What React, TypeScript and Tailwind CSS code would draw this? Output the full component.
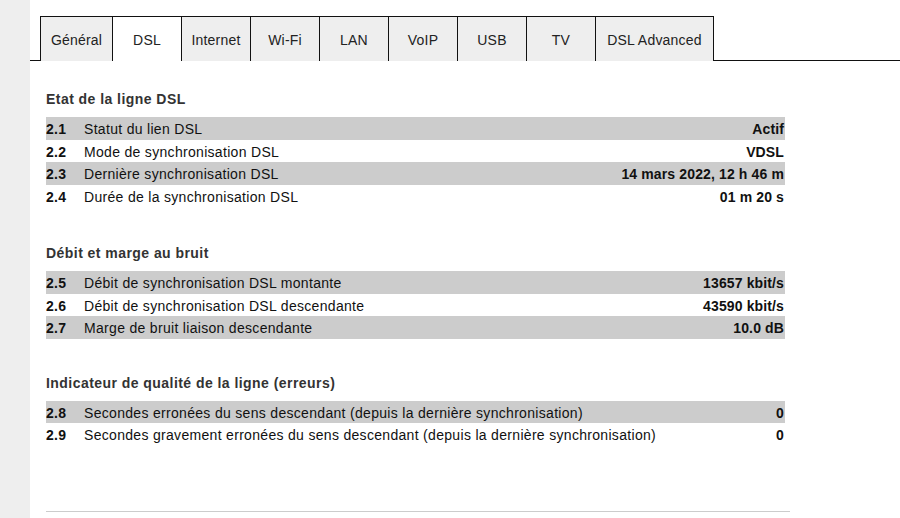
import React from "react";

const tabs = [
  { label: "Général", w: "w-[72px]" },
  { label: "DSL", w: "w-[69px]", active: true },
  { label: "Internet", w: "w-[69px]" },
  { label: "Wi-Fi", w: "w-[69px]" },
  { label: "LAN", w: "w-[69px]" },
  { label: "VoIP", w: "w-[69px]" },
  { label: "USB", w: "w-[69px]" },
  { label: "TV", w: "w-[69px]" },
  { label: "DSL Advanced", w: "w-[119px]", last: true },
];

type Row = { n: string; label: string; value: string };

const sections: { title: string; rows: Row[]; mt: string }[] = [
  {
    title: "Etat de la ligne DSL",
    mt: "mt-[29px]",
    rows: [
      { n: "2.1", label: "Statut du lien DSL", value: "Actif" },
      { n: "2.2", label: "Mode de synchronisation DSL", value: "VDSL" },
      { n: "2.3", label: "Dernière synchronisation DSL", value: "14 mars 2022, 12 h 46 m" },
      { n: "2.4", label: "Durée de la synchronisation DSL", value: "01 m 20 s" },
    ],
  },
  {
    title: "Débit et marge au bruit",
    mt: "mt-[37px]",
    rows: [
      { n: "2.5", label: "Débit de synchronisation DSL montante", value: "13657 kbit/s" },
      { n: "2.6", label: "Débit de synchronisation DSL descendante", value: "43590 kbit/s" },
      { n: "2.7", label: "Marge de bruit liaison descendante", value: "10.0 dB" },
    ],
  },
  {
    title: "Indicateur de qualité de la ligne (erreurs)",
    mt: "mt-[35px]",
    rows: [
      { n: "2.8", label: "Secondes erronées du sens descendant (depuis la dernière synchronisation)", value: "0" },
      { n: "2.9", label: "Secondes gravement erronées du sens descendant (depuis la dernière synchronisation)", value: "0" },
    ],
  },
];

export default function App() {
  return (
    <div
      className="flex h-[518px] w-[900px] overflow-hidden bg-white text-[14px] text-[#111]"
      style={{ fontFamily: '"Liberation Sans", Arial, sans-serif' }}
    >
      <div className="w-[30px] shrink-0 bg-[#eeeeee]" />
      <div className="flex flex-1 flex-col pt-[16px]">
        <div className="flex items-end">
          <div className="w-[10px] h-[45px] border-b border-[#111]" />
          {tabs.map((t) => (
            <div
              key={t.label}
              className={`${t.w} h-[45px] shrink-0 flex items-center justify-center pt-[2px] tracking-[0.2px] border-t border-l border-[#111] text-[#222] ${
                t.last ? "border-r" : ""
              } ${t.active ? "bg-white" : "bg-[#eeeeee]"}`}
            >
              {t.label}
            </div>
          ))}
          <div className="flex-1 h-[45px] border-b border-[#111]" />
        </div>
        <div className="pl-[16px] w-[755px]">
          {sections.map((s) => (
            <div key={s.title} className={s.mt}>
              <div className="h-[18px] leading-[18px] font-bold tracking-[0.45px] text-[#333] mb-[9px]">
                {s.title}
              </div>
              {s.rows.map((r, i) => (
                <div
                  key={r.n}
                  className={`flex items-center h-[22.5px] pt-[3px] pr-[1px] ${i % 2 === 0 ? "bg-[#cccccc]" : ""}`}
                >
                  <div className="w-[38px] font-bold tracking-[0.3px]">{r.n}</div>
                  <div className="flex-1 tracking-[0.31px]">{r.label}</div>
                  <div className="font-bold tracking-[0.13px]">{r.value}</div>
                </div>
              ))}
            </div>
          ))}
          <div className="mt-[65px] h-px w-[744px] bg-[#cccccc]" />
        </div>
      </div>
    </div>
  );
}
